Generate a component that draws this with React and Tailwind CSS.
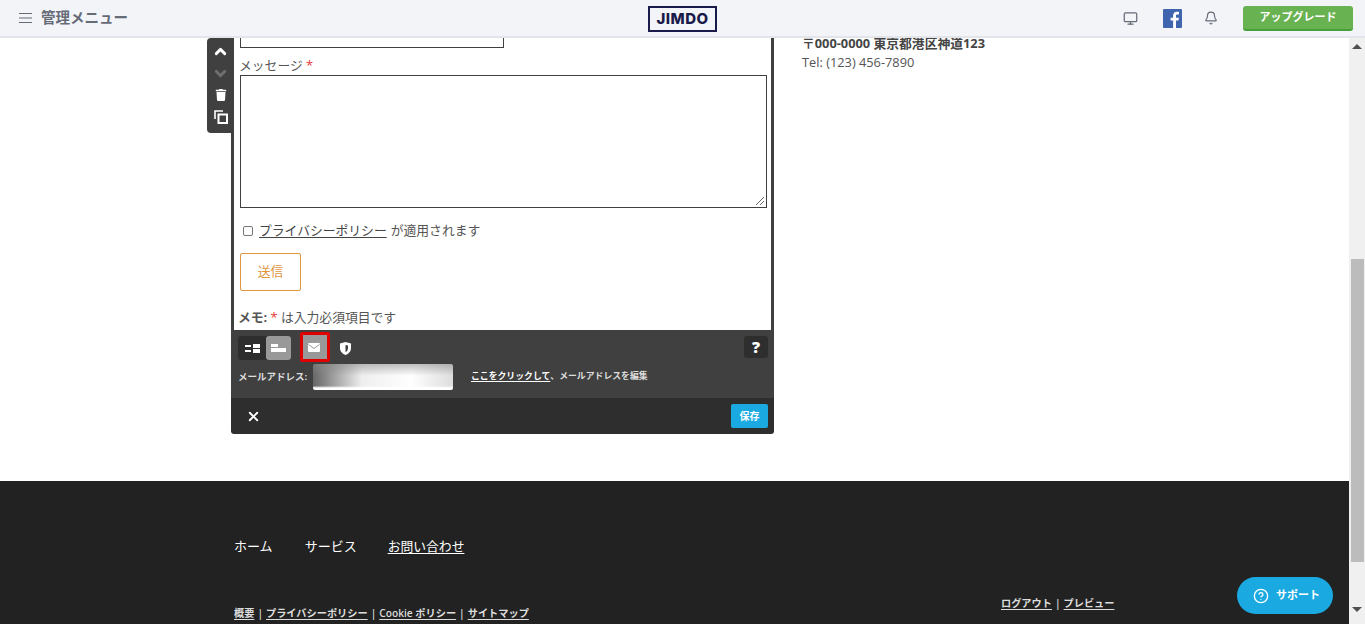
import { ChevronUp, ChevronDown, Monitor, Bell, X, CircleHelp } from "lucide-react";
import { FaTrash } from "react-icons/fa";

const App = () => {
  return (
    <div className="flex h-[624px] w-[1365px] overflow-hidden bg-white font-['Open_Sans','Noto_Sans_CJK_JP',sans-serif] text-[12.8px] text-[#555]">
      <div className="relative flex min-w-0 flex-1 flex-col">
        <main className="flex h-[481px] pt-[38px]">
          <div className="relative ml-[231px] flex h-[396px] w-[543px] flex-col rounded-b-[3px]">
            <div className="absolute left-[-24px] top-0 z-10 flex h-[95px] w-[27px] flex-col items-center rounded-l-[4px] bg-[#404040] pt-[5px]">
              <ChevronUp size={17} strokeWidth={4} className="text-white" />
              <ChevronDown size={17} strokeWidth={4} className="mt-[5px] text-[#6e6e6e]" />
              <FaTrash size={12} className="mt-[7px] text-white" />
              <svg className="mt-[9px]" width="14" height="14" viewBox="0 0 14 14" fill="none" stroke="white" strokeWidth="1.6">
                <path d="M9 1H1v8" />
                <rect x="4.5" y="4.5" width="8.5" height="8.5" strokeWidth="2" />
              </svg>
            </div>

            <div className="flex h-[292px] flex-col border-x-[3px] border-[#404040] bg-white px-[6px]">
              <div className="h-[10px] w-[264px] border-x border-b border-[#404040]" />
              <div className="mt-[7px] ml-[-1px] h-[20px] leading-[20px]">
                メッセージ <span className="text-[#e53935]">*</span>
              </div>
              <div className="relative h-[133px] w-[527px] border border-[#404040]">
                <svg className="absolute bottom-[1px] right-[1px]" width="10" height="10" viewBox="0 0 10 10" stroke="#666" fill="none">
                  <path d="M1 9 9 1M5 9 9 5" />
                </svg>
              </div>
              <div className="mt-[13px] flex h-[20px] items-center pl-[3px]">
                <span className="h-[10px] w-[10px] rounded-[2px] border border-[#777]" />
                <span className="ml-[6px] text-[#444] underline underline-offset-2">プライバシーポリシー</span>
                <span className="ml-[4px]">が適用されます</span>
              </div>
              <button className="mt-[12px] h-[38px] w-[61px] rounded-[2px] border border-[#e0953f] text-[#e0953f]">送信</button>
              <div className="mt-[16px] ml-[-2px] h-[20px] leading-[20px]">
                <span className="font-bold">メモ:</span> <span className="text-[#e53935]">*</span> は入力必須項目です
              </div>
            </div>

            <div className="flex h-[68px] flex-col bg-[#404040] pl-[7px] pr-[6px] pt-[6px]">
              <div className="flex h-[24px] items-center">
                <div className="flex h-[24px] w-[53px] rounded-[3px] bg-[#2e2e2e]">
                  <div className="flex w-[28px] items-center justify-center">
                    <svg width="15" height="9" viewBox="0 0 15 9" fill="white">
                      <path d="M0 1h6v2H0zM0 6h6v2H0zM8 0h7v4H8zM8 5h7v4H8z" />
                    </svg>
                  </div>
                  <div className="flex w-[25px] items-center justify-center rounded-[3px] bg-[#999]">
                    <svg width="15" height="9" viewBox="0 0 15 9" fill="white">
                      <path d="M0 0h7v3H0zM0 4h15v4H0z" />
                    </svg>
                  </div>
                </div>
                <div className="ml-[9px] mt-[-2px] flex h-[30px] w-[30px] items-center justify-center rounded-[2px] border-[3px] border-[#e00000] bg-[#999]">
                  <svg className="ml-[-2px]" width="12" height="9" viewBox="0 0 12 9" fill="none">
                    <rect width="12" height="9" rx="1" fill="white" />
                    <path d="M0.5 1.5 6 5.500l5.500-4" stroke="#999" strokeWidth="1" />
                  </svg>
                </div>
                <svg className="ml-[10px]" width="11" height="13" viewBox="0 0 11 13">
                  <path d="M0 1.5 5.5 0 11 1.5V6c0 3.5-2.5 5.8-5.5 7C2.5 11.8 0 9.500 0 6z" fill="white" />
                  <path d="M5.500 3 8 3.600V6c0 2-1 3.400-2.500 4.200z" fill="#404040" />
                </svg>
                <div className="ml-auto mt-[-2px] flex h-[22px] w-[24px] items-center justify-center rounded-[3px] bg-[#2e2e2e] text-[16px] font-extrabold text-white">?</div>
              </div>
              <div className="mt-[4px] flex h-[26px] items-center font-bold text-[#ddd]">
                <span className="w-[75px] shrink-0 whitespace-nowrap text-[9.5px]">メールアドレス:</span>
                <div className="h-[26px] w-[140px] rounded-[2px] bg-[linear-gradient(0deg,#fff_0%,#fff_8%,#fff0_16%),linear-gradient(180deg,#8888_0%,#fff0_45%),linear-gradient(90deg,#666_0%,#eee_35%,#fff_70%,#ddd_100%)]" />
                <span className="ml-[18px] text-[8.85px] text-white underline underline-offset-2">ここをクリックして</span>
                <span className="text-[8.85px]">、メールアドレスを編集</span>
              </div>
            </div>

            <div className="flex h-[36px] items-center justify-between rounded-b-[3px] bg-[#2e2e2e] pl-[15px] pr-[6px]">
              <X size={15} strokeWidth={3} className="text-white" />
              <button className="h-[24px] w-[37px] rounded-[2px] bg-[#1aa9e1] text-[10px] font-bold text-white">保存</button>
            </div>
          </div>

          <div className="ml-[28px] mt-[-4px] leading-[19px]">
            <div className="font-bold text-[#444]">〒000-0000 東京都港区神道123</div>
            <div>Tel: (123) 456-7890</div>
          </div>
        </main>

        <footer className="relative flex h-[143px] flex-col bg-[#222] pl-[234px] text-white">
          <nav className="mt-[55px] flex h-[20px] items-center gap-[32px] text-[13px] leading-[20px]">
            <span>ホーム</span>
            <span>サービス</span>
            <span className="ml-[-1px] text-[12.8px] underline underline-offset-2">お問い合わせ</span>
          </nav>
          <div className="mt-[48px] flex items-start text-[10.2px] font-semibold text-[#ddd]">
            <div className="flex h-[20px] w-[767px] items-center gap-[3px]">
              <span className="underline underline-offset-2">概要</span>
              <span>|</span>
              <span className="underline underline-offset-2">プライバシーポリシー</span>
              <span>|</span>
              <span className="underline underline-offset-2">Cookie ポリシー</span>
              <span>|</span>
              <span className="underline underline-offset-2">サイトマップ</span>
            </div>
            <div className="mt-[-10px] flex h-[20px] items-center gap-[3px]">
              <span className="underline underline-offset-2">ログアウト</span>
              <span>|</span>
              <span className="underline underline-offset-2">プレビュー</span>
            </div>
          </div>
        </footer>

        <button className="absolute left-[1237px] top-[577px] flex h-[37px] w-[96px] items-center justify-center gap-[7px] rounded-full bg-[#1aa9e1] pl-[3px] text-[11px] font-bold text-white">
          <CircleHelp size={16} />
          サポート
        </button>
      </div>

      <div className="flex w-[16px] flex-col items-center bg-[#f0f0f0]">
        <div className="mt-[44px] h-0 w-0 border-x-[5px] border-b-[5px] border-x-transparent border-b-[#505050]" />
        <div className="mt-[210px] h-[303px] w-[13px] bg-[#bcbcbc]" />
        <div className="mt-[45px] h-0 w-0 border-x-[5px] border-t-[5px] border-x-transparent border-t-[#505050]" />
      </div>

      <header className="absolute left-0 top-0 flex h-[38px] w-[1365px] items-center border-b-2 border-[#e4e5ea] bg-[#f3f4f8] pl-[19px] text-[#666b78]">
        <svg width="13" height="10" viewBox="0 0 13 10" stroke="currentColor" strokeWidth="1" fill="none">
          <path d="M0 0.500h13M0 5h13M0 9.500h13" />
        </svg>
        <span className="ml-[9px] text-[14.5px] font-semibold">管理メニュー</span>
        <div className="ml-[520px] mt-[2px] flex h-[26px] w-[69px] items-center justify-center border-2 border-[#1a1a4b] font-['Inter'] text-[15px] font-extrabold tracking-[0.5px] text-[#1a1a4b]">JIMDO</div>
        <Monitor size={15} className="ml-[406px]" />
        <svg className="ml-[25px] mt-[1px]" width="19" height="19" viewBox="0 0 19 19">
          <rect width="19" height="19" rx="1" fill="#3f65ae" />
          <path d="M13 19v-7.400h2.500l.4-2.900H13V6.900c0-.8.2-1.400 1.400-1.400H16V2.900c-.3 0-1.200-.1-2.200-.1-2.200 0-3.700 1.300-3.700 3.800v2.100H7.600v2.900h2.500V19z" fill="white" />
        </svg>
        <Bell size={14} className="ml-[22px]" />
        <button className="ml-[25px] h-[25px] w-[110px] rounded-[3px] border-b-2 border-[#46a03a] bg-[#69b251] text-[11px] font-bold text-white">アップグレード</button>
      </header>
    </div>
  );
};

export default App;
